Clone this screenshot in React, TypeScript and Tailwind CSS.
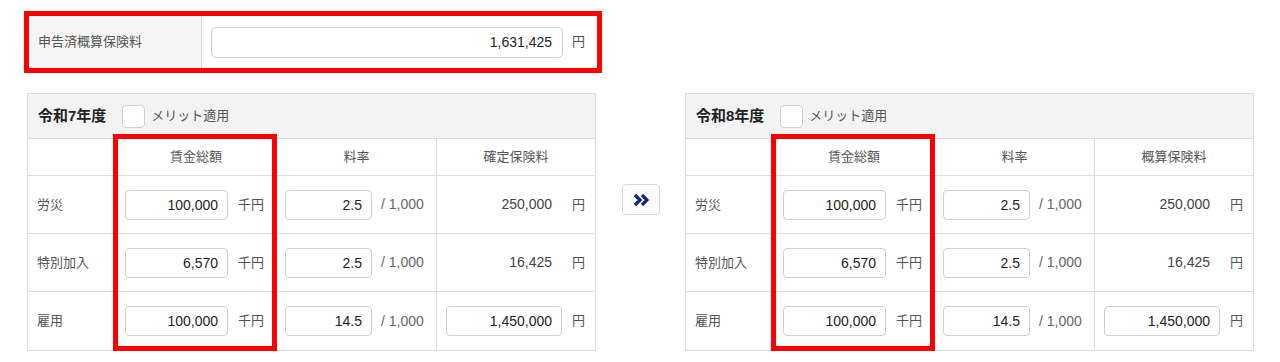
import React from "react";

const FONT = { fontFamily: '"Liberation Sans", "Noto Sans CJK JP", sans-serif' };

function Box({ value, w }: { value: string; w: string }) {
  return (
    <input
      readOnly
      value={value}
      className={`${w} h-[30px] rounded-[4px] border border-[#cfcfcf] bg-white pr-[9px] text-right text-[14px] text-[#1e1e1e] outline-none`}
    />
  );
}

type Row = {
  label: string;
  wage: string;
  rate: string;
  premium: string;
  premiumInput?: boolean;
};

const rows: Row[] = [
  { label: "労災", wage: "100,000", rate: "2.5", premium: "250,000" },
  { label: "特別加入", wage: "6,570", rate: "2.5", premium: "16,425" },
  { label: "雇用", wage: "100,000", rate: "14.5", premium: "1,450,000", premiumInput: true },
];

function YearTable({ title, premiumHeader }: { title: string; premiumHeader: string }) {
  return (
    <div className="relative w-[569px]">
      <div className="border border-[#dcdcdc] bg-white">
        <div className="flex h-[45px] items-center border-b border-[#dcdcdc] bg-[#f3f3f3] pl-[10px]">
          <span className="text-[15px] font-bold text-[#222]">{title}</span>
          <span className="ml-[16px] h-[23px] w-[23px] rounded-[4px] border border-[#cfcfcf] bg-white" />
          <span className="ml-[6px] text-[13px] text-[#555]">メリット適用</span>
        </div>
        <div className="flex h-[37px] border-b border-[#dcdcdc] text-[13px] text-[#555]">
          <div className="w-[88px] border-r border-[#dcdcdc]" />
          <div className="flex w-[161px] items-center justify-center border-r border-[#dcdcdc]">賃金総額</div>
          <div className="flex w-[160px] items-center justify-center border-r border-[#dcdcdc]">料率</div>
          <div className="flex flex-1 items-center justify-center">{premiumHeader}</div>
        </div>
        {rows.map((r, i) => (
          <div
            key={r.label}
            className={`flex h-[58px] ${i < rows.length - 1 ? "border-b border-[#dcdcdc]" : ""}`}
          >
            <div className="flex w-[88px] items-center border-r border-[#dcdcdc] pl-[9px] text-[13px] text-[#555]">
              {r.label}
            </div>
            <div className="flex w-[161px] items-center border-r border-[#dcdcdc] pl-[9px]">
              <Box value={r.wage} w="w-[103px]" />
              <span className="ml-[10px] text-[13px] text-[#555]">千円</span>
            </div>
            <div className="flex w-[160px] items-center border-r border-[#dcdcdc] pl-[8px]">
              <Box value={r.rate} w="w-[87px]" />
              <span className="ml-[9px] text-[14px] text-[#666]">/ 1,000</span>
            </div>
            <div className="flex flex-1 items-center pl-[9px]">
              {r.premiumInput ? (
                <Box value={r.premium} w="w-[116px]" />
              ) : (
                <span className="w-[116px] pr-[10px] text-right text-[14px] text-[#444]">{r.premium}</span>
              )}
              <span className="ml-[10px] text-[13px] text-[#555]">円</span>
            </div>
          </div>
        ))}
      </div>
      <div className="pointer-events-none absolute left-[86px] top-[41px] h-[217px] w-[164px] border-[5px] border-[#ff0000]" />
    </div>
  );
}

export default function App() {
  return (
    <div className="h-[362px] w-[1280px] bg-white" style={FONT}>
      <div className="pl-[24px] pt-[11px]">
        <div className="flex h-[62px] w-[578px] border-[5px] border-[#ff0000] bg-white">
          <div className="flex w-[173px] items-center border-r border-[#dcdcdc] bg-[#f5f5f5] pl-[9px] text-[13px] text-[#555]">
            申告済概算保険料
          </div>
          <div className="flex flex-1 items-center pl-[9px]">
            <input
              readOnly
              value="1,631,425"
              className="h-[31px] w-[352px] rounded-[5px] border border-[#cfcfcf] bg-white pr-[10px] text-right text-[14px] text-[#1e1e1e] outline-none"
            />
            <span className="ml-[9px] text-[13px] text-[#555]">円</span>
          </div>
        </div>
      </div>
      <div className="mt-[20px] flex pl-[27px]">
        <YearTable title="令和7年度" premiumHeader="確定保険料" />
        <div className="flex w-[89px] justify-center pt-[91px]">
          <div className="flex h-[31px] w-[38px] items-center justify-center rounded-[4px] border border-[#d8d8d8] bg-white">
            <svg width="16" height="14" viewBox="0 0 16 14">
              <polyline points="2,2 7,7 2,12" fill="none" stroke="#1a237e" strokeWidth="3.2" strokeLinejoin="miter" />
              <polyline points="9,2 14,7 9,12" fill="none" stroke="#1a237e" strokeWidth="3.2" strokeLinejoin="miter" />
            </svg>
          </div>
        </div>
        <YearTable title="令和8年度" premiumHeader="概算保険料" />
      </div>
    </div>
  );
}
